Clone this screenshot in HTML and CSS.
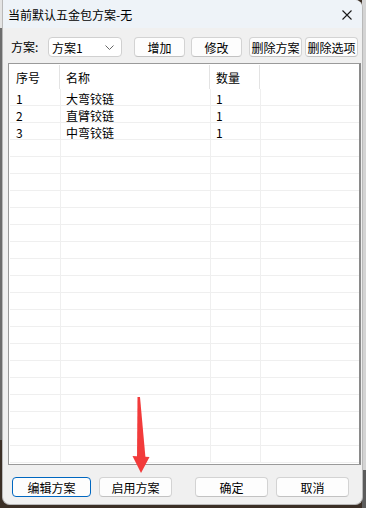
FILE: index.html
```html
<!DOCTYPE html>
<html lang="zh-CN">

<head>
    <meta charset="UTF-8">
    <meta name="viewport" content="width=device-width, initial-scale=1.0">
    <title>当前默认五金包方案-无</title>
    <link rel="stylesheet" href="styles.css">
</head>

<body>
    <div class="window">
        <div class="title-bar">
            <span class="title-text">当前默认五金包方案-无</span>
            <svg class="close-icon" width="10" height="10" viewBox="0 0 10 10">
                <path d="M0.5 0.5 L9.5 9.5 M9.5 0.5 L0.5 9.5" stroke="#1a1a1a" stroke-width="1.1" fill="none" />
            </svg>
        </div>

        <div class="toolbar">
            <span class="scheme-label">方案:</span>
            <div class="combo">
                <span>方案1</span>
                <svg width="9" height="5" viewBox="0 0 9 5">
                    <path d="M0.5 0.5 L4.5 4.5 L8.5 0.5" stroke="#666" stroke-width="1" fill="none" />
                </svg>
            </div>
            <button class="btn btn-add">增加</button>
            <button class="btn btn-edit">修改</button>
            <button class="btn btn-del">删除方案</button>
            <button class="btn btn-delopt">删除选项</button>
        </div>

        <div class="grid">
            <div class="grid-header">
                <div class="hcell col-no">序号</div>
                <div class="hcell col-name">名称</div>
                <div class="hcell col-qty">数量</div>
            </div>
            <div class="grid-body" id="grid-body"></div>
        </div>

        <div class="footer">
            <button class="btn btn-foot btn-default">编辑方案</button>
            <button class="btn btn-foot btn-apply">启用方案</button>
            <button class="btn btn-foot btn-ok">确定</button>
            <button class="btn btn-foot btn-cancel">取消</button>
        </div>
    </div>

    <svg class="arrow" width="20" height="80" viewBox="131 396 20 80">
        <polygon points="137.5,397 140,397 145.5,458 137,458" fill="#f23b3b" />
        <polygon points="132.5,456 149.5,457 141,473" fill="#f23b3b" />
    </svg>

    <script>
        var items = [
            ['1', '大弯铰链', '1'],
            ['2', '直臂铰链', '1'],
            ['3', '中弯铰链', '1']
        ];
        var body = document.getElementById('grid-body');

        // 22 rows fill the list, the empty ones only show grid lines
        for (var i = 0; i < 22; i++) {
            var data = items[i] || ['', '', ''];
            var row = document.createElement('div');
            row.className = 'grid-row';

            var classes = ['cell col-no', 'cell col-name', 'cell col-qty', 'cell col-rest'];
            for (var c = 0; c < 4; c++) {
                var cell = document.createElement('div');
                cell.className = classes[c];
                cell.textContent = data[c] || '';
                row.appendChild(cell);
            }
            body.appendChild(row);
        }
    </script>
</body>

</html>
```

FILE: styles.css
```css
* {
    box-sizing: border-box;
}

html,
body {
    margin: 0;
    height: 100%;
}

body {
    background:
        linear-gradient(#e4e4e4 0 28px, #6d6d6d 28px 440px, #3b2f26 440px) left top / 2px 100% no-repeat,
        linear-gradient(#d4d4d4 0 470px, #5c5c5c 470px) right top / 4px 100% no-repeat,
        #3b2f26;
    font-family: "Noto Sans CJK SC", "Noto Sans", sans-serif;
    font-size: 12px;
    color: #000;
    position: relative;
    overflow: hidden;
}

.window {
    margin-left: 2px;
    width: 361px;
    height: 505px;
    background: #f0f0f0;
    border: 1px solid #b9b9b9;
    border-top: none;
    border-radius: 0 8px 8px 8px;
    overflow: hidden;
}

.title-bar {
    height: 28px;
    background: #eef3f8;
    display: flex;
    align-items: center;
    justify-content: space-between;
    padding-left: 5px;
    padding-right: 10px;
}

.title-text {
    line-height: 16px;
    padding-top: 1px;
}

.close-icon {
    margin-top: 2px;
}

.toolbar {
    display: flex;
    align-items: center;
    padding-top: 9px;
    padding-left: 8px;
    height: 29px;
}

.scheme-label {
    width: 37px;
    line-height: 20px;
}

.combo {
    width: 74px;
    height: 20px;
    background: #fff;
    border: 1px solid #d0d0d0;
    border-radius: 4px;
    display: flex;
    align-items: center;
    justify-content: space-between;
    padding: 0 7px 0 3px;
}

.btn {
    height: 20px;
    padding: 0;
    font-family: inherit;
    font-size: 12px;
    color: #000;
    background: #fdfdfd;
    border: 1px solid #d3d3d3;
    border-bottom-color: #c2c2c2;
    border-radius: 4px;
}

.btn-add {
    width: 51px;
    margin-left: 12px;
}

.btn-edit {
    width: 51px;
    margin-left: 6px;
}

.btn-del {
    width: 53px;
    margin-left: 7px;
}

.btn-delopt {
    width: 53px;
    margin-left: 3px;
}

.grid {
    margin: 6px 0 0 5px;
    width: 353px;
    height: 402px;
    background: #fff;
    border: 1px solid #9a9a9a;
    border-right: 2px solid #8a8a8a;
    padding-left: 1px;
    overflow: hidden;
}

.grid-header {
    display: flex;
    height: 25px;
    padding-top: 1px;
}

.hcell {
    border-right: 1px solid #e3e3e3;
    padding-left: 6px;
    line-height: 26px;
    height: 24px;
}

.hcell.col-no {
    width: 50px;
}

.hcell.col-name {
    width: 150px;
}

.hcell.col-qty {
    width: 50px;
}

.grid-row {
    display: flex;
    height: 17px;
}

.cell {
    height: 17px;
    border-bottom: 1px solid #efefef;
    border-right: 1px solid #efefef;
    line-height: 17px;
    padding-top: 1px;
}

.cell.col-no {
    width: 51px;
    padding-left: 6px;
}

.cell.col-name {
    width: 150px;
    padding-left: 5px;
}

.cell.col-qty {
    width: 50px;
    padding-left: 5px;
}

.cell.col-rest {
    flex: 1;
    border-right: none;
}

.footer {
    display: flex;
    padding: 12px 0 0 9px;
}

.btn-foot {
    width: 73px;
}

.btn-default {
    width: 79px;
    border: 1.5px solid #0067c0;
}

.btn-apply {
    margin-left: 8px;
}

.btn-ok {
    margin-left: 23px;
}

.btn-cancel {
    margin-left: 8px;
}

.arrow {
    position: absolute;
    left: 131px;
    top: 396px;
}
```
